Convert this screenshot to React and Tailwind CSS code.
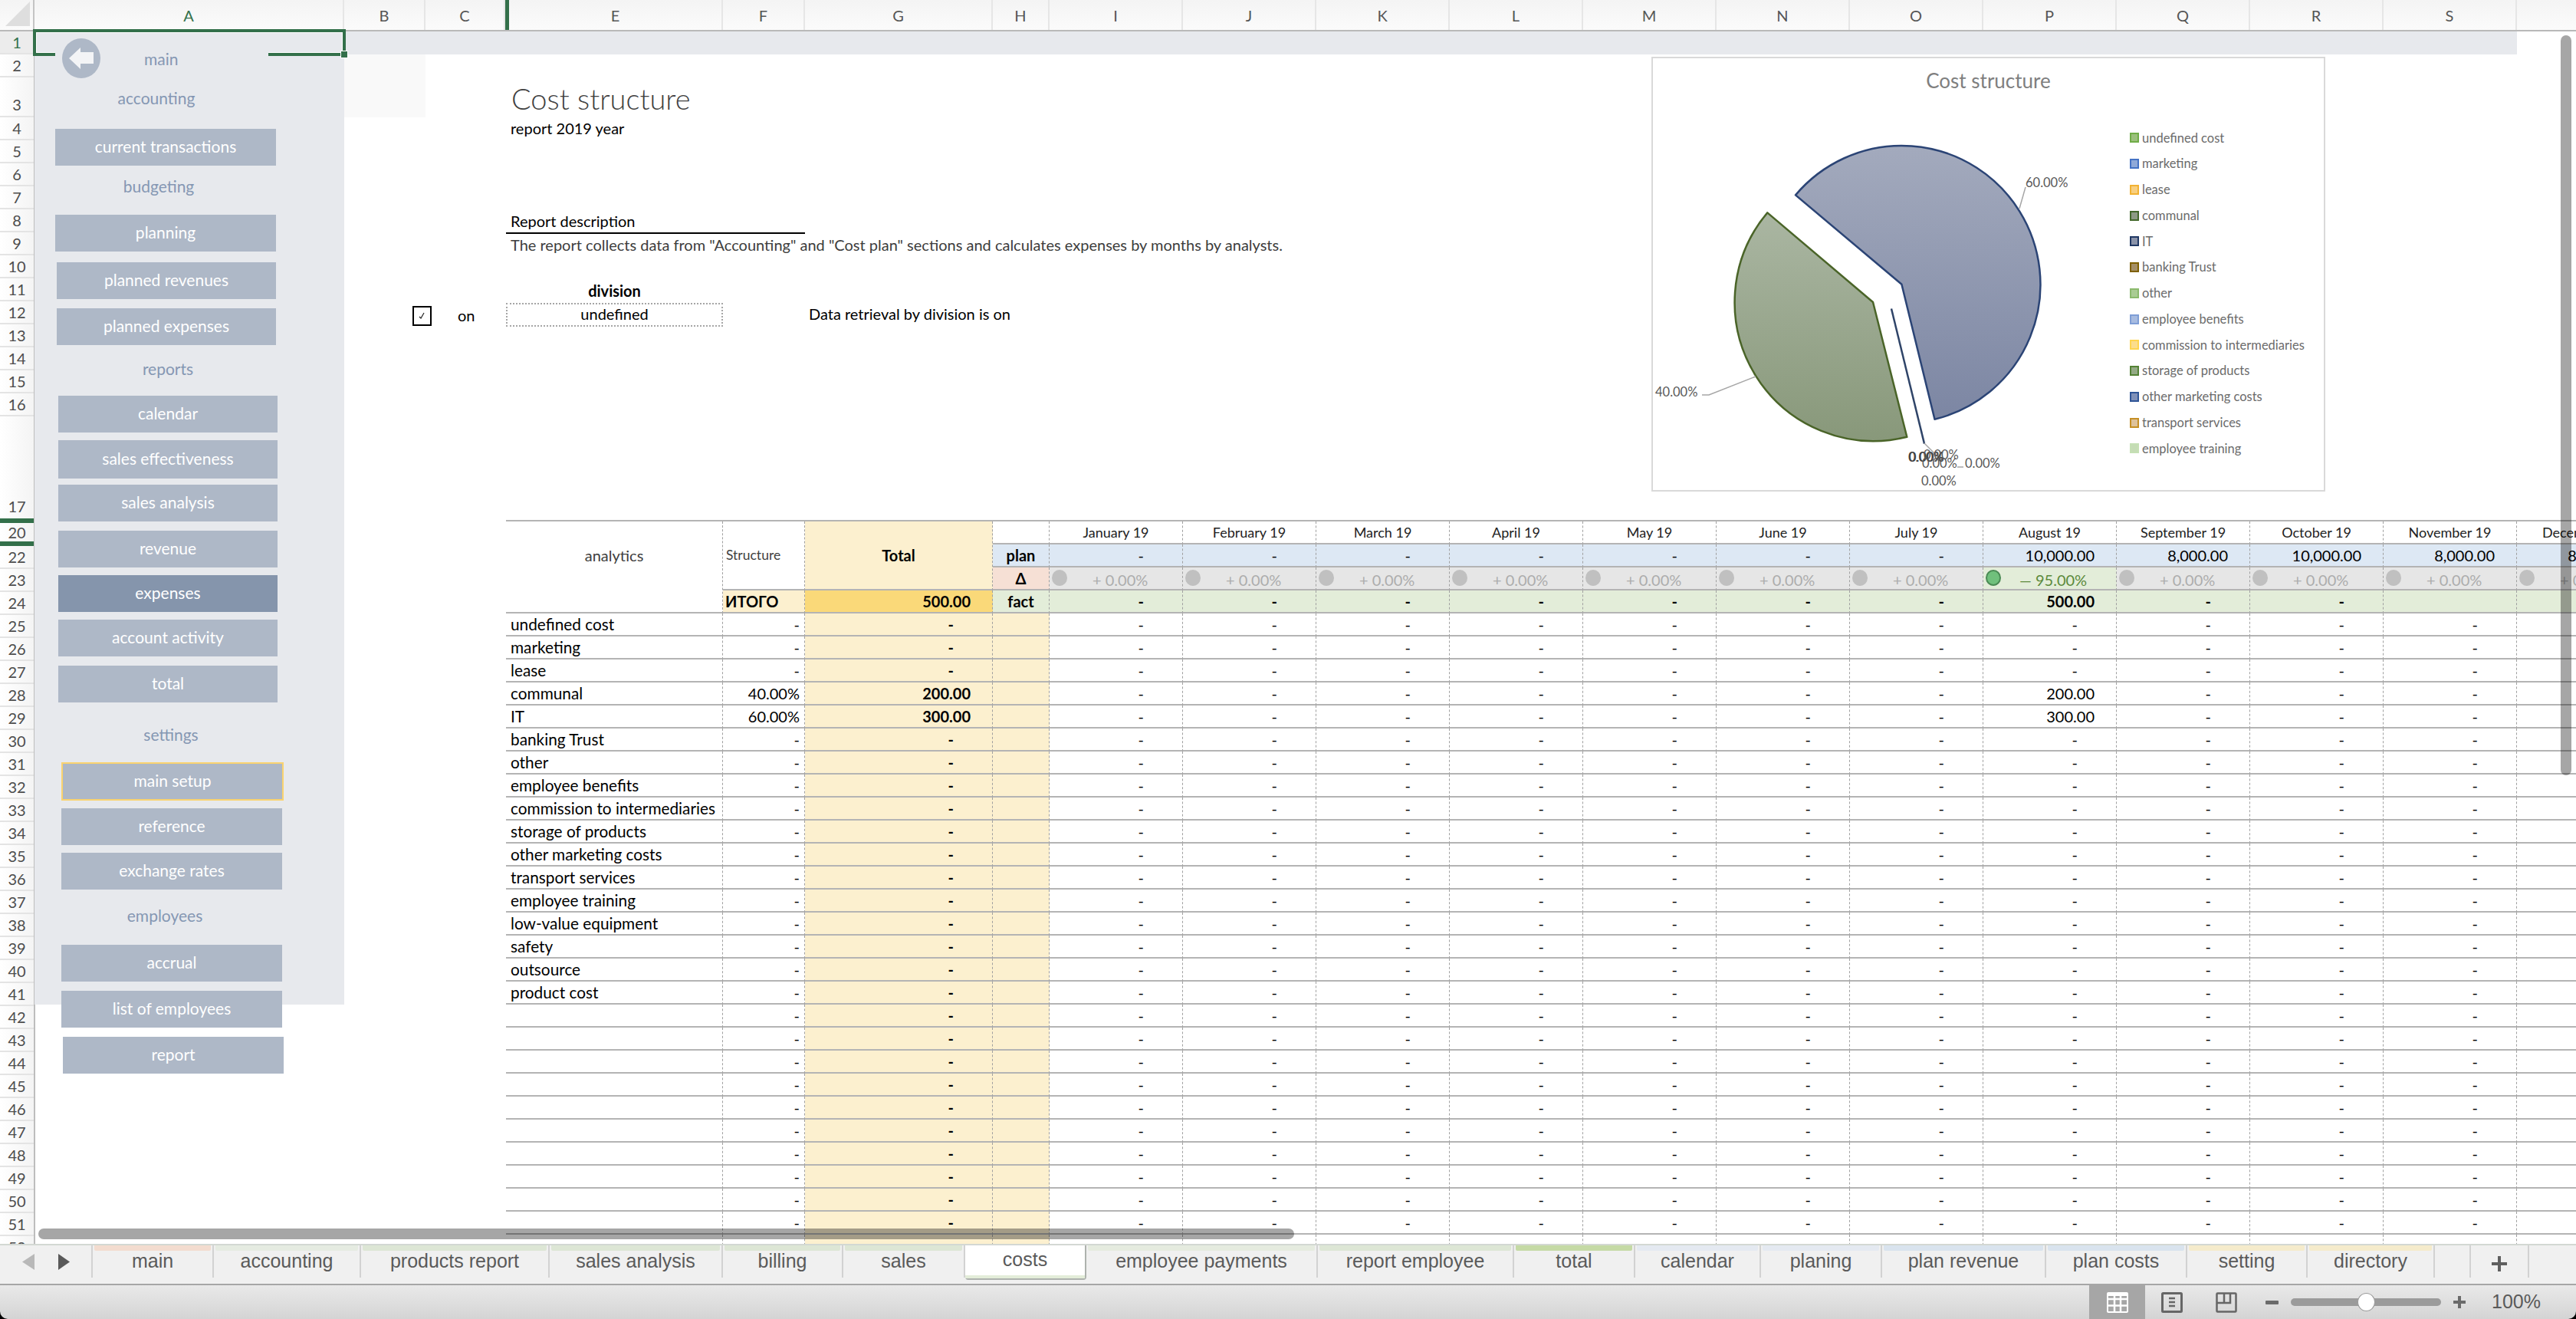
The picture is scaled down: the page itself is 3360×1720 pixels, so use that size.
import React from "react";

const calibri = "font-['Lato','Carlito','Open_Sans',sans-serif]";
const arial = "font-['Liberation_Sans',Arial,sans-serif]";

const columns = [
  ["A", "w-[404px] text-[#33704a]"],
  ["B", "w-[106px]"],
  ["C", "w-[104px]"],
  ["", "w-[5px] bg-[#33704a]"],
  ["E", "w-[279px]"],
  ["F", "w-[107px]"],
  ["G", "w-[245px]"],
  ["H", "w-[74px]"],
  ["I", "w-[174px]"],
  ["J", "w-[174px]"],
  ["K", "w-[174px]"],
  ["L", "w-[174px]"],
  ["M", "w-[174px]"],
  ["N", "w-[174px]"],
  ["O", "w-[174px]"],
  ["P", "w-[174px]"],
  ["Q", "w-[174px]"],
  ["R", "w-[174px]"],
  ["S", "w-[174px]"],
];

function ColumnHeader() {
  return (
    <div className={`flex h-[41px] shrink-0 border-b-2 border-[#b9b9b9] bg-gradient-to-b from-[#f4f4f4] to-[#fbfbfb] text-[20px] text-[#555] ${calibri}`}>
      <div className="flex h-full w-[45px] items-end justify-end border-r-2 border-[#c4c4c4] pb-[5px] pr-[4px]">
        <svg width="32" height="32" viewBox="0 0 32 32"><polygon points="32,0 32,32 0,32" fill="#dedede" /></svg>
      </div>
      {columns.map(([label, cls], i) => (
        <div key={i} className={`flex h-full items-center justify-center ${label ? "border-r-2 border-[#e6e6e6]" : ""} ${cls}`}>{label}</div>
      ))}
    </div>
  );
}

const numbered = (from, to) => Array.from({ length: to - from + 1 }, (_, i) => from + i);

function RowCell({ label, cls = "h-[30px]", active, align = "items-center" }) {
  return (
    <div className={`flex w-full shrink-0 justify-center border-b-2 border-[#e4e4e4] ${align} ${cls} ${active ? "bg-[#ececec] text-[#33704a]" : ""}`}>{label}</div>
  );
}

function RowHeader() {
  return (
    <div className={`flex h-full w-[46px] shrink-0 flex-col overflow-hidden border-r-2 border-[#bdbdbd] bg-gradient-to-r from-[#ffffff] to-[#f4f4f4] text-[20px] text-[#4d4d4d] ${calibri}`}>
      <RowCell label="1" active />
      <RowCell label="2" />
      <RowCell label="3" cls="h-[52px]" align="items-end" />
      {numbered(4, 16).map((n) => <RowCell key={n} label={n} />)}
      <div className="flex h-[133px] shrink-0 items-end justify-center pb-[1px]">17</div>
      <div className="h-[6px] w-[46px] shrink-0 bg-[#33704a]" />
      <div className="flex h-[24px] shrink-0 items-center justify-center">20</div>
      <div className="h-[6px] w-[46px] shrink-0 bg-[#33704a]" />
      {numbered(22, 52).map((n) => <RowCell key={n} label={n} />)}
    </div>
  );
}

function NavLabel({ children, cls }) {
  return <div className={`flex h-[30px] shrink-0 items-center justify-center pb-[2px] text-[21px] text-[#8597b3] ${cls}`}>{children}</div>;
}

function NavButton({ children, cls }) {
  return <div className={`flex shrink-0 items-center justify-center bg-[#aeb8c7] pb-[2px] text-[21px] text-white ${cls}`}>{children}</div>;
}

function Sidebar() {
  return (
    <div className={`flex h-[1269px] w-[404px] shrink-0 flex-col bg-[#e7e9ed] ${calibri}`}>
      <div className="relative z-30 mt-[9px] flex h-[52px] shrink-0 items-center">
        <div className="ml-[36px] flex h-[52px] w-[50px] items-center justify-center rounded-[50%] bg-[#aeb8c7]">
          <svg width="32" height="28" viewBox="0 0 32 28"><polygon points="0,14 15,0 15,6 32,6 32,21 15,21 15,28" fill="#f3f4f6" /></svg>
        </div>
        <div className="ml-[57px] mt-[2px] text-[21px] text-[#8597b3]">main</div>
      </div>
      <NavLabel cls="mt-[12px] w-[318px]">accounting</NavLabel>
      <NavButton cls="ml-[27px] mt-[24px] h-[48px] w-[288px]">current transactions</NavButton>
      <NavLabel cls="mt-[13px] w-[324px]">budgeting</NavLabel>
      <NavButton cls="ml-[27px] mt-[21px] h-[48px] w-[288px]">planning</NavButton>
      <NavButton cls="ml-[29px] mt-[14px] h-[48px] w-[286px]">planned revenues</NavButton>
      <NavButton cls="ml-[29px] mt-[12px] h-[48px] w-[286px]">planned expenses</NavButton>
      <NavLabel cls="mt-[17px] w-[348px]">reports</NavLabel>
      <NavButton cls="ml-[31px] mt-[19px] h-[48px] w-[286px]">calendar</NavButton>
      <NavButton cls="ml-[31px] mt-[10px] h-[50px] w-[286px]">sales effectiveness</NavButton>
      <NavButton cls="ml-[31px] mt-[8px] h-[48px] w-[286px]">sales analysis</NavButton>
      <NavButton cls="ml-[31px] mt-[12px] h-[48px] w-[286px]">revenue</NavButton>
      <div className="ml-[31px] mt-[10px] flex h-[48px] w-[286px] shrink-0 items-center justify-center bg-[#8595ac] pb-[2px] text-[21px] text-white">expenses</div>
      <NavButton cls="ml-[31px] mt-[10px] h-[48px] w-[286px]">account activity</NavButton>
      <NavButton cls="ml-[31px] mt-[12px] h-[48px] w-[286px]">total</NavButton>
      <NavLabel cls="mt-[28px] w-[356px]">settings</NavLabel>
      <NavButton cls="ml-[35px] mt-[20px] h-[50px] w-[290px] border-2 border-[#fad36f]">main setup</NavButton>
      <NavButton cls="ml-[35px] mt-[10px] h-[48px] w-[288px]">reference</NavButton>
      <NavButton cls="ml-[35px] mt-[10px] h-[48px] w-[288px]">exchange rates</NavButton>
      <NavLabel cls="mt-[20px] w-[340px]">employees</NavLabel>
      <NavButton cls="ml-[35px] mt-[22px] h-[48px] w-[288px]">accrual</NavButton>
      <NavButton cls="ml-[35px] mt-[12px] h-[48px] w-[288px]">list of employees</NavButton>
      <NavButton cls="ml-[37px] mt-[12px] h-[48px] w-[288px]">report</NavButton>
    </div>
  );
}

const legend = [
  ["undefined cost", "border-[#70ad47] bg-[#9bc07c]"],
  ["marketing", "border-[#4472c4] bg-[#8fa9d8]"],
  ["lease", "border-[#f2b233] bg-[#f8cf80]"],
  ["communal", "border-[#43682b] bg-[#8d9a85]"],
  ["IT", "border-[#203864] bg-[#8a93a9]"],
  ["banking Trust", "border-[#7f6000] bg-[#a58f66]"],
  ["other", "border-[#8bba6d] bg-[#a9cc93]"],
  ["employee benefits", "border-[#7f9ed6] bg-[#a7bbe0]"],
  ["commission to intermediaries", "border-[#ffd54f] bg-[#fbdd8d]"],
  ["storage of products", "border-[#548235] bg-[#94aa85]"],
  ["other marketing costs", "border-[#2f5597] bg-[#7f90b8]"],
  ["transport services", "border-[#c58f25] bg-[#dec29a]"],
  ["employee training", "border-[#c5e0b4] bg-[#c5dcb5]"],
];

function Chart() {
  const labelFont = { fontFamily: "Lato, sans-serif", fontSize: 16.5, fill: "#595959" };
  return (
    <div className={`relative mt-[3px] h-[567px] w-[879px] shrink-0 border-2 border-[#d9d9d9] bg-white ${calibri}`}>
      <svg className="absolute -left-[2px] -top-[2px]" width="879" height="567" viewBox="2154 74 879 567">
        <defs>
          <linearGradient id="blue" x1="0" y1="0" x2="0" y2="1">
            <stop offset="0" stopColor="#a3aabd" />
            <stop offset="1" stopColor="#7c86a3" />
          </linearGradient>
          <linearGradient id="green" x1="0" y1="0" x2="0" y2="1">
            <stop offset="0" stopColor="#aab6a2" />
            <stop offset="1" stopColor="#88987a" />
          </linearGradient>
        </defs>
        <path d="M2480.4 370.8 L2342 254.4 A181 181 0 1 1 2523.5 546.8 Z" fill="url(#blue)" stroke="#2b4475" strokeWidth="2.5" strokeLinejoin="round" />
        <path d="M2443 394 L2487.3 569.8 A181 181 0 0 1 2305.3 277.4 Z" fill="url(#green)" stroke="#4a6428" strokeWidth="2.5" strokeLinejoin="round" />
        <line x1="2467" y1="402.5" x2="2510" y2="578.6" stroke="#2f4468" strokeWidth="2.5" />
        <path d="M2642 244 L2634 272" stroke="#a6a6a6" strokeWidth="1.5" fill="none" />
        <path d="M2220 515 L2229 515 L2290 491" stroke="#a6a6a6" strokeWidth="1.5" fill="none" />
        <path d="M2510 578 L2530 598 M2553 609 L2561 609" stroke="#a6a6a6" strokeWidth="1.5" fill="none" />
        <text x="2642" y="244" {...labelFont}>60.00%</text>
        <text x="2159" y="517" {...labelFont}>40.00%</text>
        <text x="2489" y="602" {...labelFont} fill="#404040">0.00%</text>
        <text x="2490" y="602" {...labelFont} fill="#404040">0.00%</text>
        <text x="2509" y="599" {...labelFont}>0.00%</text>
        <text x="2507" y="610" {...labelFont}>0.00%</text>
        <text x="2563" y="610" {...labelFont}>0.00%</text>
        <text x="2506" y="633" {...labelFont}>0.00%</text>
      </svg>
      <div className="relative mt-[12px] text-center text-[26px] leading-[34px] text-[#7f7f7f]">Cost structure</div>
      <div className="relative ml-[622px] mt-[41px] flex flex-col text-[16.5px] text-[#6b6b6b]">
        {legend.map(([name, cls]) => (
          <div key={name} className="flex h-[33.75px] items-center gap-[4px] whitespace-nowrap">
            <span className={`h-[13px] w-[12px] border-2 ${cls}`} />
            {name}
          </div>
        ))}
      </div>
    </div>
  );
}

function TopBlock() {
  return (
    <div className={`flex h-[607px] shrink-0 text-[20px] text-black ${calibri}`}>
      <div className="flex w-[211px] shrink-0 flex-col">
        <div className="h-[82px] w-[106px] bg-[#f9f9f9]" />
        <div className="ml-[89px] mt-[243px] flex items-center">
          <div className="flex h-[26px] w-[25px] items-center justify-center border-2 border-black">
            <svg width="10" height="10" viewBox="0 0 10 10"><path d="M1 6 L3 8 L7 1" stroke="#222" strokeWidth="1.2" fill="none" /></svg>
          </div>
          <div className="ml-[34px] pb-[2px]">on</div>
        </div>
      </div>
      <div className="flex w-[1494px] shrink-0 flex-col">
        <div className="ml-[7px] mt-[32px] text-[38px] font-light leading-[50px] text-[#404040]">Cost structure</div>
        <div className="ml-[6px] h-[30px] leading-[28px]">report 2019 year</div>
        <div className="mt-[92px] h-[30px] w-[390px] border-b-2 border-black pl-[6px] leading-[26px]">Report description</div>
        <div className="ml-[6px] h-[30px] leading-[28px] text-[#3d3d3d]">The report collects data from "Accounting" and "Cost plan" sections and calculates expenses by months by analysts.</div>
        <div className="mt-[30px] h-[29px] w-[283px] text-center font-bold leading-[28px]">division</div>
        <div className="flex items-center">
          <div className="flex h-[31px] w-[283px] items-center justify-center border-2 border-dotted border-[#a6a6a6] pb-[2px]">undefined</div>
          <div className="ml-[112px] pb-[2px]">Data retrieval by division is on</div>
        </div>
      </div>
      <Chart />
    </div>
  );
}

const months = ["January 19", "February 19", "March 19", "April 19", "May 19", "June 19", "July 19", "August 19", "September 19", "October 19", "November 19", "December 19"];
const plan = ["-", "-", "-", "-", "-", "-", "-", "10,000.00", "8,000.00", "10,000.00", "8,000.00", "8,000.00"];
const fact = ["-", "-", "-", "-", "-", "-", "-", "500.00", "-", "-", "", ""];
const labels = ["undefined cost", "marketing", "lease", "communal", "IT", "banking Trust", "other", "employee benefits", "commission to intermediaries", "storage of products", "other marketing costs", "transport services", "employee training", "low-value equipment", "safety", "outsource", "product cost"];
const rowValues = {
  3: { share: "40.00%", total: "200.00" },
  4: { share: "60.00%", total: "300.00" },
};

const line = "border-b-2 border-r border-b-[#b4b4b4] border-r-[#a0a0a0] [border-right-style:dashed]";

function numCell(text, bg = "") {
  const pad = text === "-" ? "pr-[50px]" : "pr-[28px]";
  return <div className={`flex items-center justify-end ${line} ${pad} ${bg}`}>{text}</div>;
}

function DeltaCell({ good }) {
  return (
    <div className={`flex items-start ${line} ${good ? "bg-[#e3edd9]" : "bg-[#e6e6e6]"}`}>
      {good ? (
        <span className="ml-[3px] mt-[3px] h-[21px] w-[20px] rounded-[50%] border-2 border-[#4a8a54] bg-[#70c07c]" />
      ) : (
        <span className="ml-[3px] mt-[3px] h-[21px] w-[20px] rounded-[50%] bg-[#c0c0c0]" />
      )}
      {good ? (
        <span className="ml-[24px] mt-[2px] leading-[28px] text-[#5c8a3c]">— 95.00%</span>
      ) : (
        <span className="ml-[33px] mt-[2px] leading-[28px] text-[#adadad]">+ 0.00%</span>
      )}
    </div>
  );
}

function Table() {
  const blanks = numbered(labels.length, 27);
  const rows = [...labels, ...blanks.map(() => "")];
  return (
    <div className="relative ml-[211px] min-h-0 flex-1 overflow-hidden">
      <div className={`grid w-[2799px] auto-rows-[30px] grid-cols-[283px_107px_245px_74px_repeat(12,174px)] border-t-2 border-[#b4b4b4] text-[20px] text-black ${calibri}`}>
        <div className={`row-span-4 flex items-center justify-center pb-[30px] text-[#404040] ${line}`}>analytics</div>
        <div className={`row-span-3 flex items-center pl-[4px] text-[17.5px] text-[#404040] ${line}`}>Structure</div>
        <div className={`row-span-3 flex items-center justify-center bg-[#fcf0cf] font-bold ${line}`}>Total</div>
        <div className={line} />
        {months.map((m) => <div key={m} className={`flex items-center justify-center whitespace-nowrap text-[18px] text-[#222] ${line}`}>{m}</div>)}

        <div className={`flex items-center justify-center bg-[#dde8f4] font-bold ${line}`}>plan</div>
        {plan.map((p, i) => <React.Fragment key={i}>{numCell(p, "bg-[#dde8f4]")}</React.Fragment>)}

        <div className={`flex items-center justify-center bg-[#f6e0d5] font-bold ${line}`}>Δ</div>
        {months.map((m, i) => <DeltaCell key={m} good={i === 7} />)}

        <div className={`flex items-center bg-[#fcf0cf] pl-[3px] font-bold ${line}`}>ИТОГО</div>
        <div className={`flex items-center justify-end bg-[#fad979] pr-[28px] font-bold ${line}`}>500.00</div>
        <div className={`flex items-center justify-center bg-[#e3edd9] font-bold ${line}`}>fact</div>
        {fact.map((p, i) => <React.Fragment key={i}>{numCell(p, "bg-[#e3edd9] font-bold")}</React.Fragment>)}

        {rows.map((name, r) => {
          const v = rowValues[r];
          return (
            <React.Fragment key={r}>
              <div className={`flex items-center whitespace-nowrap pl-[6px] text-[20.8px] ${line}`}>{name}</div>
              <div className={`flex items-center justify-end pr-[6px] ${line}`}>{v ? v.share : "-"}</div>
              {numCell(v ? v.total : "-", "bg-[#fcf0cf] font-bold")}
              <div className={`bg-[#fcf0cf] ${line}`} />
              {months.map((m, i) => (
                <React.Fragment key={m}>{numCell(i === 7 && v ? v.total : "-")}</React.Fragment>
              ))}
            </React.Fragment>
          );
        })}
      </div>
    </div>
  );
}

const tabs = [
  ["main", "w-[158px]", "bg-[#f3dccf]"],
  ["accounting", "w-[192px]", "bg-[#e5ebe1]"],
  ["products report", "w-[246px]", "bg-[#dde6d5]"],
  ["sales analysis", "w-[226px]", "bg-[#dde6d5]"],
  ["billing", "w-[157px]", "bg-[#dde6d5]"],
  ["sales", "w-[159px]", "bg-[#dde6d5]"],
  ["costs", "w-[158px]", ""],
  ["employee payments", "w-[302px]", "bg-[#e5ebdf]"],
  ["report employee", "w-[256px]", "bg-[#dde6d5]"],
  ["total", "w-[158px]", "bg-[#c5daa5]"],
  ["calendar", "w-[164px]", "bg-[#e4e9f1]"],
  ["planing", "w-[158px]", "bg-[#e4e9f1]"],
  ["plan revenue", "w-[214px]", "bg-[#d9e3ee]"],
  ["plan costs", "w-[184px]", "bg-[#d9e3ee]"],
  ["setting", "w-[157px]", "bg-[#f5ebcb]"],
  ["directory", "w-[166px]", "bg-[#f5ebcb]"],
];

function TabBar() {
  return (
    <div className={`relative z-40 flex h-[54px] shrink-0 border-b-2 border-t-2 border-b-[#a6a6a6] border-t-[#d3d8d3] bg-[#f0f0f0] text-[25px] text-[#5a5a5a] ${arial}`}>
      <div className="flex h-[42px] w-[121px] shrink-0 items-center border-r-2 border-[#d2d2d2] pl-[29px]">
        <svg width="16" height="21" viewBox="0 0 16 21"><polygon points="16,0 16,21 0,10.5" fill="#b8b8b8" /></svg>
        <svg className="ml-[31px]" width="15" height="21" viewBox="0 0 15 21"><polygon points="0,0 15,10.5 0,21" fill="#595959" /></svg>
      </div>
      {tabs.map(([name, w, strip]) =>
        name === "costs" ? (
          <div key={name} className={`flex h-[45px] shrink-0 flex-col rounded-b-[4px] border-b-2 border-r-2 border-[#aeb2ae] bg-white ${w}`}>
            <div className="flex flex-1 items-center justify-center pb-[1px]">{name}</div>
            <div className="h-[7px] bg-[#e3edd9]" />
          </div>
        ) : (
          <div key={name} className={`flex h-[42px] shrink-0 flex-col border-r-2 border-[#d2d2d2] ${w}`}>
            <div className={`mx-[2px] h-[7px] rounded-b-[2px] ${strip}`} />
            <div className="flex h-[27px] items-center justify-center whitespace-nowrap">{name}</div>
          </div>
        )
      )}
      <div className="h-[42px] w-[47px] shrink-0 border-r-2 border-[#d2d2d2]" />
      <div className="flex h-[42px] w-[76px] shrink-0 items-center justify-center border-r-2 border-[#d2d2d2] pt-[6px]">
        <svg width="20" height="20" viewBox="0 0 20 20"><path d="M10 0 V20 M0 10 H20" stroke="#5f5f5f" strokeWidth="4" /></svg>
      </div>
    </div>
  );
}

function StatusBar() {
  return (
    <div className={`flex h-[44px] shrink-0 items-center rounded-b-[10px] bg-gradient-to-b from-[#e9e9e9] to-[#d4d4d4] ${arial}`}>
      <div className="ml-[2725px] flex h-[44px] w-[73px] items-center justify-center bg-[#a6a6a6]">
        <svg width="28" height="27" viewBox="0 0 28 27">
          <rect x="1" y="1" width="26" height="25" rx="1" fill="#a6a6a6" stroke="#fff" strokeWidth="2" />
          <path d="M10 1 V26 M18 1 V26 M1 9 H27 M1 17.5 H27" stroke="#fff" strokeWidth="2.5" />
          <rect x="1" y="1" width="26" height="4" fill="#fff" />
        </svg>
      </div>
      <svg className="ml-[21px]" width="28" height="27" viewBox="0 0 28 27">
        <rect x="1.5" y="1.5" width="25" height="24" rx="1" fill="none" stroke="#666" strokeWidth="3" />
        <path d="M10 8 H18 M10 13 H18 M10 18 H18" stroke="#666" strokeWidth="2.5" />
      </svg>
      <svg className="ml-[43px]" width="28" height="27" viewBox="0 0 28 27">
        <rect x="1.5" y="1.5" width="25" height="24" rx="1" fill="none" stroke="#666" strokeWidth="2.5" />
        <path d="M11 1 V14 H1 M19 1 V14 H11" stroke="#666" strokeWidth="2.5" fill="none" />
      </svg>
      <div className="ml-[37px] h-[5px] w-[17px] rounded-[1px] bg-[#6b6b6b]" />
      <div className="ml-[16px] flex h-[10px] w-[196px] items-center rounded-full bg-[#9b9b9b]">
        <div className="ml-[87px] h-[24px] w-[23px] shrink-0 rounded-[50%] border border-[#9a9a9a] bg-white" />
      </div>
      <svg className="ml-[16px]" width="16" height="16" viewBox="0 0 16 16"><path d="M8 0 V16 M0 8 H16" stroke="#6b6b6b" strokeWidth="4" /></svg>
      <div className="ml-[34px] text-[25px] text-[#5a5a5a]">100%</div>
    </div>
  );
}

function Selection() {
  return (
    <>
      <div className="absolute left-[43px] top-[38px] z-20 h-[35px] w-[408px] border-[4px] border-[#33704a] shadow-[inset_0_0_0_1px_#ffffff]" />
      <div className="absolute left-[72px] top-[68px] z-20 h-[6px] w-[278px] bg-[#e7e9ed]" />
      <div className="absolute left-[444px] top-[66px] z-20 h-[10px] w-[10px] border border-white bg-[#33704a]" />
    </>
  );
}

export default function App() {
  return (
    <div className="relative flex h-[1720px] w-[3360px] flex-col overflow-hidden bg-black">
      <ColumnHeader />
      <div className="flex min-h-0 flex-1 bg-white">
        <RowHeader />
        <div className="-ml-[1px] flex min-w-0 flex-1">
          <Sidebar />
          <div className="flex min-w-0 flex-1 flex-col">
            <div className="h-[30px] w-[2834px] shrink-0 bg-[#e7e9ed]" />
            <TopBlock />
            <Table />
          </div>
        </div>
      </div>
      <TabBar />
      <StatusBar />
      <Selection />
      <div className="absolute left-[3340px] top-[46px] z-30 h-[965px] w-[14px] rounded-full bg-black/35" />
      <div className="absolute left-[50px] top-[1602px] z-30 h-[14px] w-[1638px] rounded-full bg-black/35" />
    </div>
  );
}
